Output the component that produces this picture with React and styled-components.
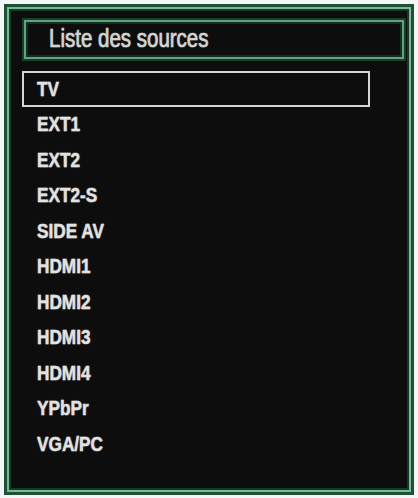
import React from "react";
import styled, { createGlobalStyle } from "styled-components";

const Global = createGlobalStyle`
  html, body { margin: 0; padding: 0; background: #f4f7f5; }
  body { font-family: "Liberation Sans", Arial, sans-serif; }
`;

const Page = styled.div`
  width: 418px;
  height: 498px;
  padding: 4px 4px 3px 4px;
  box-sizing: border-box;
`;

const Panel = styled.div`
  height: 100%;
  box-sizing: border-box;
  background: #0d0d0d;
  border: 3px solid #1d5035;
  box-shadow: inset 0 0 0 2px #7dba93, inset 0 0 0 4px #153a27;
  padding: 11px 5px 0 15px;
  display: flex;
  flex-direction: column;
`;

const TitleBox = styled.div`
  height: 43px;
  box-sizing: border-box;
  border: 2px solid #173f2a;
  box-shadow: inset 0 0 0 2px #64a27e, inset 0 0 0 4px #12301f;
  display: flex;
  align-items: center;
  padding: 0 0 2px 25px;
`;

const Narrow = styled.span`
  display: inline-block;
  white-space: nowrap;
  transform: scaleX(0.82);
  transform-origin: left center;
`;

const Title = styled(Narrow)`
  font-size: 25px;
  color: #d2d4d2;
  -webkit-text-stroke: 0.6px #d2d4d2;
  text-shadow: 0 0 1.5px rgba(220, 220, 220, 0.55);
`;

const List = styled.div`
  margin-top: 10px;
  display: flex;
  flex-direction: column;
`;

const Row = styled.div`
  height: 35.5px;
  box-sizing: border-box;
  width: 348px;
  display: flex;
  align-items: center;
  padding-left: ${(p) => (p.$active ? "13px" : "15px")};
  border: ${(p) => (p.$active ? "2px solid #d6d6d6" : "none")};
`;

const Label = styled(Narrow)`
  font-size: 21px;
  font-weight: bold;
  color: #e2e2e2;
  -webkit-text-stroke: 0.3px #e2e2e2;
  text-shadow: 0 0 1.5px rgba(230, 230, 230, 0.6);
`;

const sources = [
  "TV",
  "EXT1",
  "EXT2",
  "EXT2-S",
  "SIDE AV",
  "HDMI1",
  "HDMI2",
  "HDMI3",
  "HDMI4",
  "YPbPr",
  "VGA/PC",
];

export default function App() {
  return (
    <>
      <Global />
      <Page>
        <Panel>
          <TitleBox>
            <Title>Liste des sources</Title>
          </TitleBox>
          <List>
            {sources.map((s, i) => (
              <Row key={s} $active={i === 0}>
                <Label>{s}</Label>
              </Row>
            ))}
          </List>
        </Panel>
      </Page>
    </>
  );
}
